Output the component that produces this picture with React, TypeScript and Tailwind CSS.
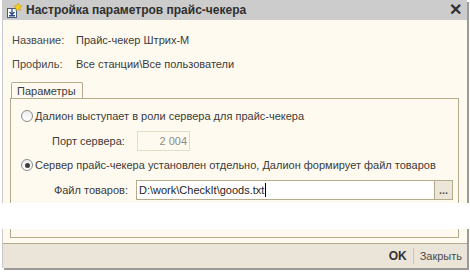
import React from "react";

const font = { fontFamily: '"Liberation Sans", Arial, sans-serif' };

function WinIcon() {
  return (
    <svg width="18" height="17" viewBox="0 0 18 17">
      <rect x="1.5" y="6.5" width="9" height="9" fill="#fff" stroke="#4a5a7a" />
      <path d="M6 7v5M3.5 10l2.5 2.5L8.5 10" stroke="#2a4a8a" strokeWidth="1.3" fill="none" />
      <rect x="3" y="13" width="6" height="1.5" fill="#2a4a8a" />
      <path d="M12 1l1.2 2.6 2.8.3-2.1 1.9.6 2.8L12 7.2 9.5 8.6l.6-2.8L8 3.9l2.8-.3z" fill="#f5d020" stroke="#c89a00" strokeWidth="0.6" />
    </svg>
  );
}

function Radio({ checked }: { checked?: boolean }) {
  return (
    <span className="flex h-[12px] w-[12px] shrink-0 items-center justify-center rounded-full border border-[#8a8a8a] bg-gradient-to-b from-[#eeeeee] to-[#ffffff]">
      {checked && <span className="h-[5px] w-[5px] rounded-full bg-[#3c3c3c]" />}
    </span>
  );
}

export default function App() {
  return (
    <div className="relative h-[272px] w-[470px] overflow-hidden bg-white text-[11px] text-[#3b3b3b]" style={font}>
      <div className="ml-[2px] flex h-[268px] w-[465px] flex-col border-l border-[#c8c8c8] bg-[#fffaef] shadow-[2px_2px_0_#9a9a9a]">
        <div className="flex h-[20px] shrink-0 items-center bg-[#cccccc] pl-[3px] pr-[5px]">
          <WinIcon />
          <span className="ml-[2px] text-[12px] font-bold text-[#2f2f2f]">Настройка параметров прайс-чекера</span>
          <span className="ml-auto text-[16px] font-bold leading-none text-[#333]">✕</span>
        </div>

        <div className="flex flex-1 flex-col px-[7px]">
          <div className="mt-[12px] flex h-[16px] items-center whitespace-nowrap">
            <span className="w-[66px] shrink-0 pl-[2px] text-[#4a4a4a]">Название:</span>
            <span>Прайс-чекер Штрих-М</span>
          </div>
          <div className="mt-[8px] flex h-[16px] items-center whitespace-nowrap">
            <span className="w-[66px] shrink-0 pl-[2px] text-[#4a4a4a]">Профиль:</span>
            <span>Все станции\Все пользователи</span>
          </div>

          <div className="mt-[10px] flex">
            <div className="ml-[1px] flex h-[17px] w-[72px] items-center rounded-t-[2px] border border-b-0 border-[#b5ab8c] bg-[#fffaef] pl-[5px]">
              Параметры
            </div>
          </div>
          <div className="-mt-px flex h-[140px] w-[449px] flex-col whitespace-nowrap border border-[#b5ab8c] pl-[10px]">
            <div className="mt-[9px] flex h-[16px] items-center gap-[2px]">
              <Radio />
              <span>Далион выступает в роли сервера для прайс-чекера</span>
            </div>
            <div className="mt-[7px] flex h-[20px] items-center pl-[31px]">
              <span className="w-[85px] shrink-0">Порт сервера:</span>
              <div className="flex h-[20px] w-[53px] items-center justify-end border border-[#e2dcc8] pr-[2px] text-[#8c8c8c]">
                2 004
              </div>
            </div>
            <div className="mt-[6px] flex h-[16px] items-center gap-[2px]">
              <Radio checked />
              <span>Сервер прайс-чекера установлен отдельно, Далион формирует файл товаров</span>
            </div>
            <div className="mt-[7px] flex h-[20px] items-center pl-[31px]">
              <span className="w-[84px] shrink-0 pr-[8px] text-right">Файл товаров:</span>
              <div className="flex h-[20px] w-[299px] items-center border border-[#b5ab8c] bg-white pl-[2px] text-[#1e1e1e]">
                D:\work\CheckIt\goods.txt
                <span className="ml-[1px] h-[14px] w-px bg-black" />
              </div>
              <div className="flex h-[20px] w-[18px] items-center justify-center border border-l-0 border-[#b5ab8c] bg-[#ece6d8] text-[11px] font-bold leading-none text-[#555]">
                ...
              </div>
            </div>
          </div>
        </div>

        <div className="flex h-[25px] shrink-0 items-center justify-end border-t border-[#b5ab8c] bg-[#ebe5d9] pr-[5px]">
          <span className="text-[12px] font-bold text-[#333]">OK</span>
          <span className="mx-[6px] h-[16px] w-px bg-[#cfc7b4]" />
          <span className="text-[#4a4a4a]">Закрыть</span>
        </div>
      </div>

      <div className="absolute left-0 top-[203px] h-[26px] w-[470px] bg-white" />
    </div>
  );
}
